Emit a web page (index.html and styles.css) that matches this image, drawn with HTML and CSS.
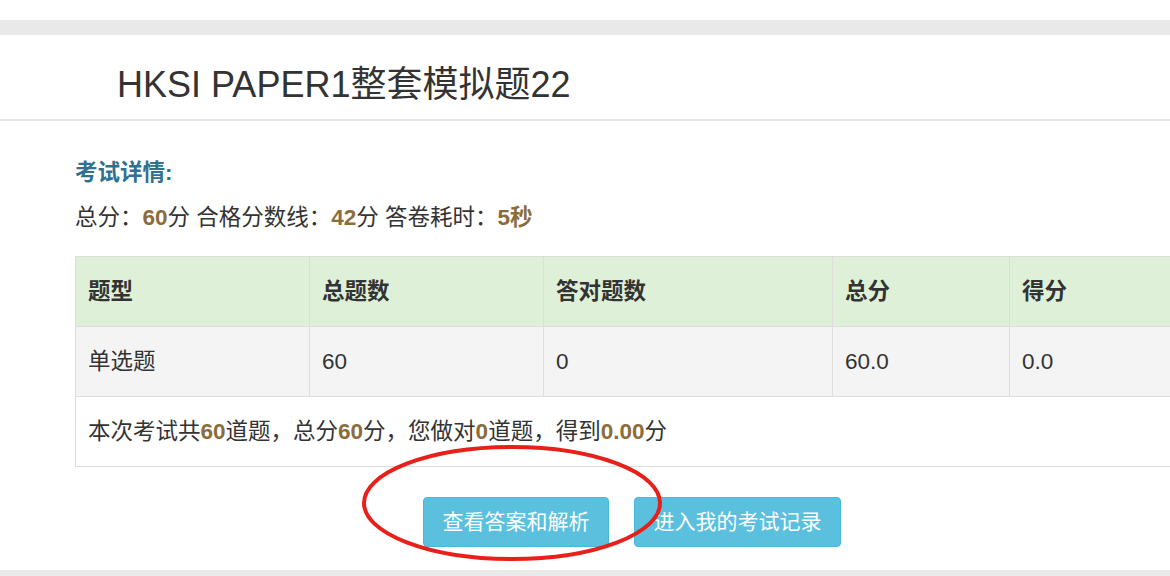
FILE: index.html
```html
<!DOCTYPE html>
<html>
<head>
<meta charset="utf-8">
<title>HKSI PAPER1整套模拟题22 - 考试结果</title>
<link rel="stylesheet" href="styles.css">
</head>

<body>
<div class="page_wrap">
	<div class="panel">
		<div class="panel_head">
			<h3>HKSI PAPER1整套模拟题22</h3>
		</div>
		<div class="panel_body">
			<h4 class="detail_title">考试详情:</h4>
			<p class="detail_info">总分：<b>60</b>分 合格分数线：<b>42</b>分 答卷耗时：<b>5秒</b></p>
			<table class="result_table">
				<colgroup>
					<col class="c1"><col class="c2"><col class="c3"><col class="c4"><col class="c5">
				</colgroup>
				<tr class="head_row">
					<th>题型</th>
					<th>总题数</th>
					<th>答对题数</th>
					<th>总分</th>
					<th>得分</th>
				</tr>
				<tr class="data_row">
					<td>单选题</td>
					<td>60</td>
					<td>0</td>
					<td>60.0</td>
					<td>0.0</td>
				</tr>
				<tr>
					<td colspan="5">本次考试共<b>60</b>道题，总分<b>60</b>分，您做对<b>0</b>道题，得到<b>0.00</b>分</td>
				</tr>
			</table>
			<div class="btn_bar">
				<a class="btn" href="#">查看答案和解析</a>
				<a class="btn" href="#">进入我的考试记录</a>
				<svg class="mark" width="308" height="124" viewBox="0 0 308 124">
					<ellipse cx="152" cy="61" rx="148" ry="56" fill="none" stroke="#e8201a" stroke-width="4"/>
				</svg>
			</div>
		</div>
	</div>
</div>
</body>
</html>
```

FILE: styles.css
```css
html,body,div,h3,h4,p,table,th,td {margin: 0;padding: 0;}
html {overflow: hidden;}
body {background: #fff;color: #333;font-family: "Liberation Sans", "Noto Sans CJK SC", sans-serif;font-size: 22.5px;line-height: 30px;}
b {font-weight: bold;color: #8a6d3b;}
.page_wrap {margin-top: 20px;padding: 15px 0 40px;background: #e9e9e9;}
.panel {background: #fff;overflow: hidden;}
.panel_head {height: 86px;padding-left: 117px;border-bottom: 2px solid #e5e5e5;box-sizing: border-box;}
.panel_head h3 {padding-top: 30px;font-size: 36px;line-height: 40px;font-weight: normal;color: #333;}
.panel_body {padding: 37px 0 23px 75px;}
.detail_title {font-size: 22.5px;line-height: 30px;font-weight: bold;color: #31708f;}
.detail_info {margin-top: 15px;}
.result_table {margin-top: 23px;border-collapse: collapse;table-layout: fixed;width: 1200px;}
.result_table .c1 {width: 234px;}
.result_table .c2 {width: 234px;}
.result_table .c3 {width: 289px;}
.result_table .c4 {width: 177px;}
.result_table .c5 {width: 266px;}
.result_table th,
.result_table td {height: 70px;padding: 0 12px;border: 1px solid #ddd;text-align: left;vertical-align: middle;box-sizing: border-box;}
.result_table th {font-weight: bold;}
.head_row {background: #dff0d8;}
.data_row {background: #f4f4f4;}
.btn_bar {position: relative;display: flex;gap: 25px;margin-top: 30px;padding-left: 348px;}
.btn {display: block;padding: 9px 18.5px;border: 1px solid #46b8da;border-radius: 4px;background: #5bc0de;color: #fff;text-decoration: none;font-size: 21px;line-height: 30px;}
.mark {position: absolute;left: 285px;top: -55px;}
```
